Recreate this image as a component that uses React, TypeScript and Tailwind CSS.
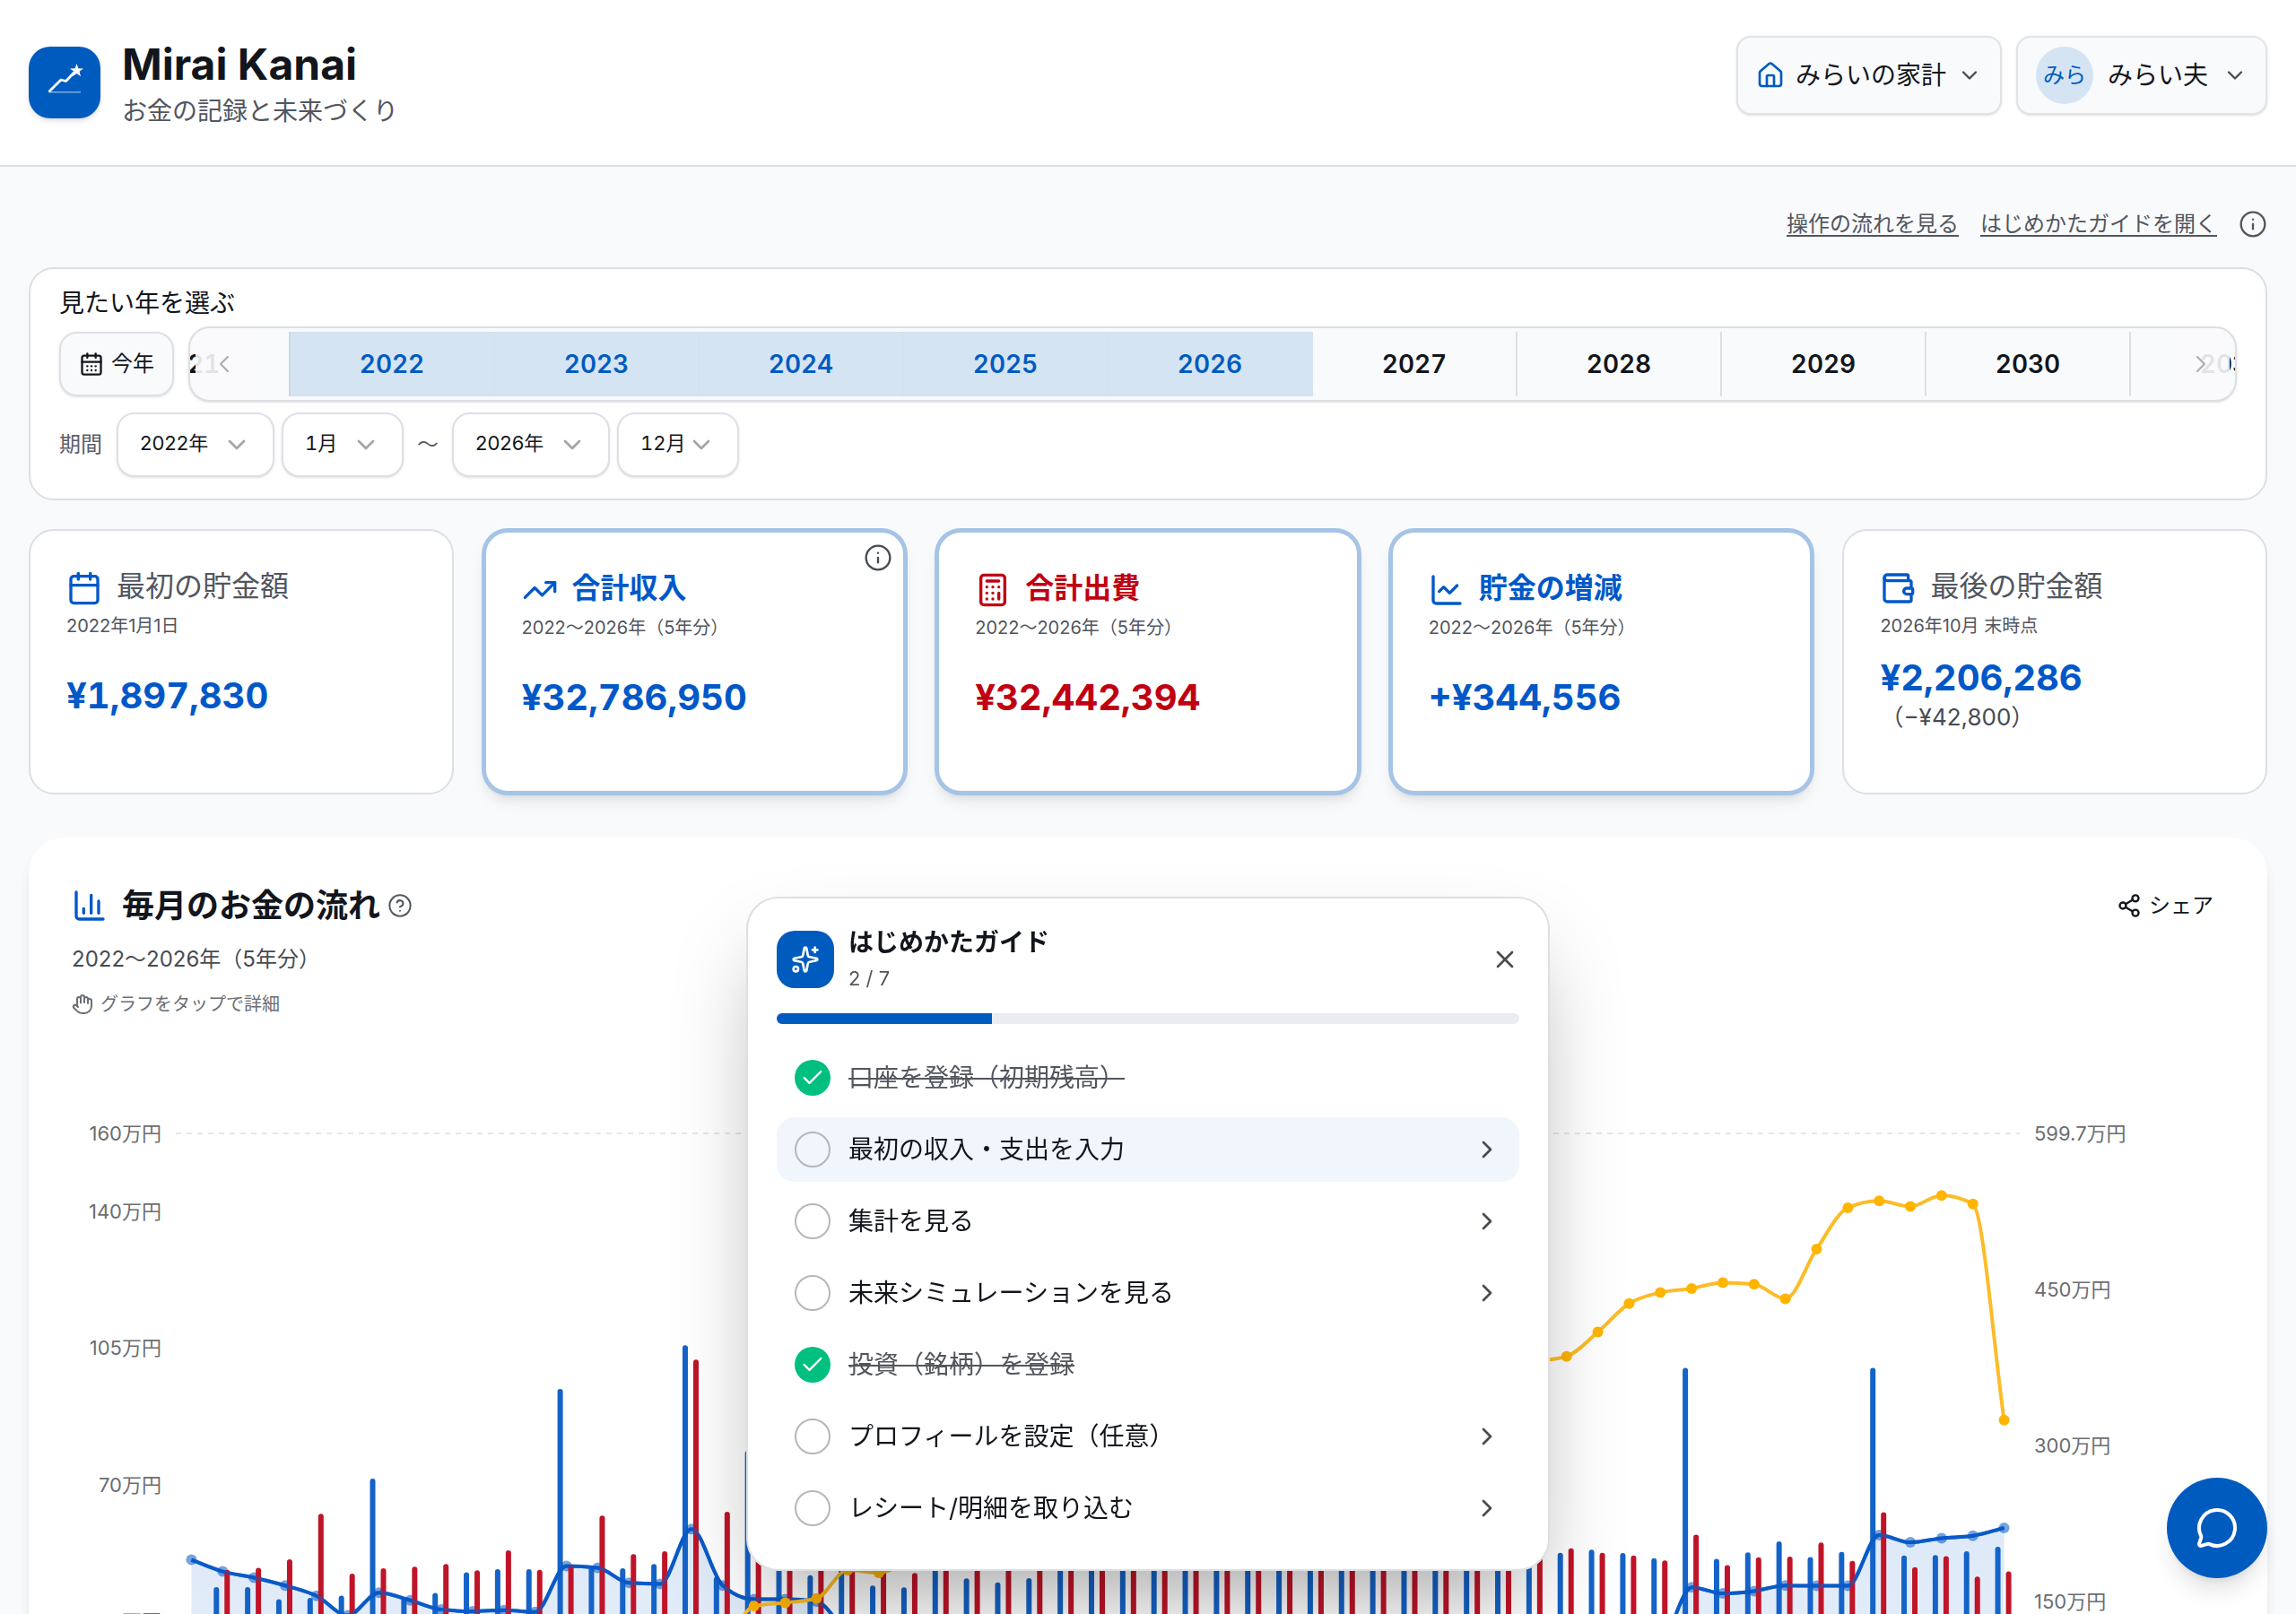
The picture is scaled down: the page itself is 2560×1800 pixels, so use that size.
import React, { useState } from 'react';
import {
  Calculator,
  Calendar,
  CalendarDays,
  ChartColumn,
  ChartLine,
  Check,
  ChevronDown,
  ChevronLeft,
  ChevronRight,
  CircleQuestionMark,
  Hand,
  House,
  Info,
  MessageCircle,
  Share2,
  Sparkles,
  TrendingUp,
  Wallet,
  X,
} from 'lucide-react';
import clsx from 'clsx';

const YEARS = [2021, 2022, 2023, 2024, 2025, 2026, 2027, 2028, 2029, 2030, 2031];

const STEPS = [
  { label: '口座を登録（初期残高）', done: true },
  { label: '最初の収入・支出を入力', done: false },
  { label: '集計を見る', done: false },
  { label: '未来シミュレーションを見る', done: false },
  { label: '投資（銘柄）を登録', done: true },
  { label: 'プロフィールを設定（任意）', done: false },
  { label: 'レシート/明細を取り込む', done: false },
];

// 単位: 万円。先頭は期首残高のみで収支なし
const INCOME = [
  0, 43.7, 43.7, 40.6, 40.9, 41.5, 71.5, 41, 42.2, 47.5, 48.3, 48.3, 94.5, 48.9, 48.5, 49.6, 105.7, 46.3, 78.6, 50,
  46.7, 50, 44.1, 43.6, 80, 45.9, 44.9, 46, 52, 52, 96, 52, 52, 52, 52, 52, 98, 52, 52, 52, 52, 52, 98, 52,
  52.5, 53.3, 52.4, 51.1, 99.9, 50.9, 52.6, 55.4, 51.4, 52.7, 99.9, 51.8, 51.9, 52.9, 54,
];
const EXPENSE = [
  0, 48.1, 48.6, 50.8, 62.5, 47.1, 48.5, 48.9, 49.6, 48, 53.1, 48.1, 49.4, 62, 52.1, 52.9, 102, 63, 55, 54,
  52, 52, 52, 47.3, 60, 52, 52, 52, 52, 52, 52, 52, 52, 52, 52, 52, 52, 52, 52, 52, 52, 52, 52, 52,
  53.6, 52.5, 51.8, 50.5, 57.1, 49.3, 51.3, 51.5, 55.1, 50.4, 62.9, 48.8, 51.6, 46.4, 47.7,
];
const SAVINGS = [
  189.9, 178.7, 172.8, 165.2, 155.3, 136.5, 158.3, 151, 142.1, 140.5, 141.5, 139.8, 184, 182.3, 167.8, 166.8, 219.6,
  165.2, 152, 152, 150, 120, 110, 110, 112, 112, 112, 112, 112, 112, 112, 112, 112, 112, 112, 112, 112, 112, 112, 112,
  112, 112, 112, 112, 112, 112, 112, 112, 163.5, 157.6, 159.9, 165.2, 164.9, 164.9, 213.7, 206.7, 210.7, 213, 220.6,
];
const INVEST_START = 17;
const INVEST = [
  100, 145.4, 148.7, 152.7, 180, 177.4, 190, 205, 215, 225, 235, 245, 255, 265, 275, 285, 295, 305, 315, 325, 335,
  345, 355, 362, 370, 376, 380.5, 385.4, 408.8, 436.2, 446.8, 450.7, 456.3, 454.7, 440.8, 488.6, 528.2, 534.8, 529.5,
  540.1, 531.8, 324.1,
];

const PLOT = { left: 116, right: 2172, top: 64, bottom: 760 };
const BAND = (PLOT.right - PLOT.left) / INCOME.length;

const xAt = (i: number) => PLOT.left + BAND * (i + 0.5);
const yFlow = (v: number) => PLOT.bottom - (v / 160) * (PLOT.bottom - PLOT.top);
const yStock = (v: number) => PLOT.bottom - (v / 599.7) * (PLOT.bottom - PLOT.top);

type Point = { x: number; y: number };

// 単調性を保つ3次補間
function monotonePath(pts: Point[]) {
  const n = pts.length;
  const slope = pts.slice(1).map((p, i) => (p.y - pts[i].y) / (p.x - pts[i].x));
  const tangent = pts.map((_, i) => {
    if (i === 0) return slope[0];
    if (i === n - 1) return slope[n - 2];
    const a = slope[i - 1];
    const b = slope[i];
    if (a * b <= 0) return 0;
    return Math.sign(a) * Math.min(Math.abs(a), Math.abs(b), Math.abs(a + b) / 4) * 2;
  });
  let d = `M${pts[0].x},${pts[0].y}`;
  for (let i = 0; i < n - 1; i++) {
    const h = (pts[i + 1].x - pts[i].x) / 3;
    d += `C${pts[i].x + h},${pts[i].y + tangent[i] * h} ${pts[i + 1].x - h},${pts[i + 1].y - tangent[i + 1] * h} ${pts[i + 1].x},${pts[i + 1].y}`;
  }
  return d;
}

const savingsPts = SAVINGS.map((v, i) => ({ x: xAt(i), y: yStock(v) }));
const investPts = INVEST.map((v, i) => ({ x: xAt(i + INVEST_START), y: yStock(v) }));

const CashflowChart: React.FC = () => {
  const line = monotonePath(savingsPts);
  return (
    <svg viewBox="0 0 2400 880" className="block w-full" role="img" aria-label="毎月のお金の流れ">
      <defs>
        <linearGradient id="savings-fill" x1="0" y1="0" x2="0" y2="1">
          <stop offset="0" stopColor="#0058c8" stopOpacity="0.13" />
          <stop offset="1" stopColor="#0058c8" stopOpacity="0.09" />
        </linearGradient>
      </defs>
      <line x1={PLOT.left} x2={PLOT.right} y1={PLOT.top} y2={PLOT.top} stroke="#e5e6e8" strokeWidth="2" strokeDasharray="6 6" />
      <g fontSize="22" fill="#6b6d70">
        {[160, 140, 105, 70, 35].map((v) => (
          <text key={v} x="100" y={yFlow(v) + 8} textAnchor="end">{v}万円</text>
        ))}
        {[599.7, 450, 300, 150].map((v) => (
          <text key={v} x="2188" y={yStock(v) + 8}>{v}万円</text>
        ))}
      </g>
      <path d={`${line}L${xAt(SAVINGS.length - 1)},${PLOT.bottom}L${xAt(0)},${PLOT.bottom}Z`} fill="url(#savings-fill)" />
      <g fill="#1463c8">
        {INCOME.map((v, i) => v > 0 && (
          <rect key={i} x={xAt(i) - 10} y={yFlow(v)} width="6" height={PLOT.bottom - yFlow(v)} rx="3" />
        ))}
      </g>
      <path d={line} fill="none" stroke="#0a5ac8" strokeWidth="4" />
      <g fill="#0058c8" fillOpacity="0.55">
        {savingsPts.map((p, i) => <circle key={i} cx={p.x} cy={p.y} r="6" />)}
      </g>
      <g fill="#c01428">
        {EXPENSE.map((v, i) => v > 0 && (
          <rect key={i} x={xAt(i) + 2} y={yFlow(v)} width="6" height={PLOT.bottom - yFlow(v)} rx="3" />
        ))}
      </g>
      <path d={line} fill="none" stroke="#0a5ac8" strokeWidth="4" strokeOpacity="0.6" />
      <path d={monotonePath(investPts)} fill="none" stroke="#fcbc28" strokeWidth="4" />
      <g fill="#ffb400">
        {investPts.map((p, i) => <circle key={i} cx={p.x} cy={p.y} r="6" />)}
      </g>
    </svg>
  );
};

const Logo: React.FC = () => (
  <div className="size-20 rounded-3xl bg-[#005bbf] shadow-md">
    <svg viewBox="0 0 80 80" className="size-20" fill="none" aria-hidden="true">
      <path d="M22 50.7H58" stroke="#fff" strokeOpacity="0.5" strokeWidth="1.6" />
      <path d="M22.7 50.3 36 37l5.5 1.5L51 28.5" stroke="#fff" strokeWidth="2.8" strokeLinejoin="round" />
      <path d="m53.5 19 1.8 5.3 5.7.1-4.5 3.4 1.6 5.4-4.6-3.2-4.6 3.2 1.6-5.4-4.5-3.4 5.7-.1z" fill="#fff" />
    </svg>
  </div>
);

const Header: React.FC = () => (
  <header className="flex shrink-0 items-start justify-between border-b-2 border-[#dcdfe4] bg-white px-8 py-10">
    <div className="flex items-center gap-6">
      <Logo />
      <div>
        <h1 className="text-5xl/[64px] font-bold">Mirai Kanai</h1>
        <p className="text-[28px]/[40px] text-[#52565e]">お金の記録と未来づくり</p>
      </div>
    </div>
    <div className="flex gap-4">
      <button className="flex h-22 items-center gap-3 rounded-2xl border-2 border-[#e1e3e7] bg-[#f9fafc] px-5 text-[28px] shadow-sm">
        <House size={32} className="text-[#005bbf]" />
        みらいの家計
        <ChevronDown size={28} className="text-[#474b52]" />
      </button>
      <button className="flex h-22 items-center gap-4 rounded-2xl border-2 border-[#e1e3e7] bg-[#f9fafc] px-5 text-[28px] shadow-sm">
        <span className="flex size-16 items-center justify-center rounded-full bg-[#d5e4f3] text-2xl text-[#005bbf]">みら</span>
        みらい夫
        <ChevronDown size={28} className="text-[#474b52]" />
      </button>
    </div>
  </header>
);

type SelectBoxProps = { label: string; value: string; options: string[]; wide?: boolean };

const SelectBox: React.FC<SelectBoxProps> = ({ label, value, options, wide }) => (
  <div className="relative">
    <select
      aria-label={label}
      defaultValue={value}
      className={clsx(
        'h-18 appearance-none rounded-[20px] border-2 border-[#dee0e5] bg-white pb-1 pl-6 text-[22px] shadow-sm outline-none',
        wide ? 'w-44' : 'w-34 tabular-nums'
      )}
    >
      {options.map((o) => <option key={o}>{o}</option>)}
    </select>
    <ChevronDown size={32} className="pointer-events-none absolute top-5 right-6.5 text-[#a4a5a7]" />
  </div>
);

const MONTHS = Array.from({ length: 12 }, (_, i) => `${i + 1}月`);
const YEAR_OPTIONS = YEARS.map((y) => `${y}年`);

function yearCellStyle(y: number) {
  if (y === 2022) return 'border-[#cdd8e4] bg-[#d5e4f3] text-[#005bbf]';
  if (y > 2022 && y <= 2026) return 'border-[#d3e2f1] bg-[#d5e4f3] text-[#005bbf]';
  if (y === 2027) return 'border-[#d5e4f3]';
  return 'border-[#dcdfe4]';
}

const YearPicker: React.FC = () => (
  <section className="rounded-[28px] border-2 border-[#dcdfe4] bg-white px-8 pt-4 pb-6">
    <h2 className="text-[28px]/[44px]">見たい年を選ぶ</h2>
    <div className="mt-1 flex items-center gap-4">
      <button className="flex h-18 shrink-0 items-center gap-2 rounded-[20px] border-2 border-[#dee0e5] bg-[#f9fafc] px-5 text-2xl shadow-sm">
        <CalendarDays size={28} />
        今年
      </button>
      <div className="relative flex h-21 min-w-0 flex-1 items-center justify-center overflow-hidden rounded-3xl border-2 border-[#dcdfe4] bg-[#f9fafc] pr-2 shadow-sm">
        {YEARS.map((y) => (
          <button key={y} className={clsx('h-18 w-[228px] shrink-0 border-l-2 text-[28px] font-semibold tabular-nums', yearCellStyle(y))}>
            {y}
          </button>
        ))}
        <button aria-label="前の年へ" className="absolute inset-y-1 left-1.5 flex w-16 items-center justify-center bg-[#f9fafc]/90 text-[#a9abb0]">
          <ChevronLeft size={32} strokeWidth={1.5} />
        </button>
        <button aria-label="次の年へ" className="absolute inset-y-1 right-1.5 flex w-16 items-center justify-center bg-[#f9fafc]/90 text-[#a9abb0]">
          <ChevronRight size={32} strokeWidth={1.5} />
        </button>
      </div>
    </div>
    <div className="mt-3 flex items-center gap-2">
      <span className="pr-2 text-2xl text-[#5a5e66]">期間</span>
      <SelectBox label="開始年" value="2022年" options={YEAR_OPTIONS} wide />
      <SelectBox label="開始月" value="1月" options={MONTHS} />
      <span className="w-[38px] text-center text-2xl text-[#5a5e66]">〜</span>
      <SelectBox label="終了年" value="2026年" options={YEAR_OPTIONS} wide />
      <SelectBox label="終了月" value="12月" options={MONTHS} />
    </div>
  </section>
);

type StatCardProps = {
  icon: React.ReactNode;
  title: string;
  sub: string;
  value: string;
  note?: string;
  active?: boolean;
  red?: boolean;
  info?: boolean;
};

const StatCard: React.FC<StatCardProps> = ({ icon, title, sub, value, note, active, red, info }) => (
  <article
    className={clsx(
      'relative flex min-h-[296px] flex-col rounded-[28px] bg-white px-10 py-10',
      active ? 'border-4 border-[#a5c4e6] shadow-lg ring-1 ring-[#a5c4e6]' : 'border-2 border-[#dcdfe4] pb-11',
      red ? 'text-[#c00012]' : 'text-[#0058c8]'
    )}
  >
    <div className="flex h-12 gap-4">
      <span className="self-center">{icon}</span>
      <h3 className={clsx('text-[32px]/[44px]', active ? 'font-bold' : 'text-[#52565e]')}>{title}</h3>
    </div>
    <p className="mt-1 text-xl/7 text-[#52565e]">{sub}</p>
    <div className="flex flex-1 flex-col justify-center">
      <p className="text-[40px]/[48px] font-bold tabular-nums">{value}</p>
      {note && <p className="text-[26px]/[40px] text-[#474b52]">{note}</p>}
    </div>
    {info && (
      <button aria-label="説明" className="absolute top-3 right-3 text-[#474b52]">
        <Info size={32} strokeWidth={1.75} />
      </button>
    )}
  </article>
);

const ChartPanel: React.FC = () => (
  <section className="mt-12 rounded-[40px] bg-white px-12 pt-12 shadow-lg">
    <div className="flex h-14 items-center justify-between">
      <div className="flex items-center gap-2">
        <ChartColumn size={40} className="text-[#0058c8]" />
        <h2 className="pl-2 text-4xl/[56px] font-bold">毎月のお金の流れ</h2>
        <CircleQuestionMark size={28} strokeWidth={1.75} className="text-[#52565e]" />
      </div>
      <button className="flex items-center gap-2 px-3 text-2xl">
        <Share2 size={28} />
        シェア
      </button>
    </div>
    <p className="mt-3 text-2xl/[40px] text-[#474b52]">2022〜2026年（5年分）</p>
    <p className="mt-3.5 flex items-center gap-2 text-xl/[32px] text-[#6b6e73]">
      <Hand size={24} />
      グラフをタップで詳細
    </p>
    <div className="mt-16">
      <CashflowChart />
    </div>
  </section>
);

const StartGuide: React.FC<{ onClose: () => void }> = ({ onClose }) => (
  <aside
    role="dialog"
    aria-label="はじめかたガイド"
    className="fixed inset-x-0 bottom-12 mx-auto w-[896px] rounded-[36px] border-2 border-[#dcdfe4] bg-white px-8 pt-7 pb-8 shadow-[0_50px_100px_-24px_rgba(0,0,0,0.35)]"
  >
    <div className="flex items-center gap-4">
      <div className="flex size-16 items-center justify-center rounded-[20px] bg-[#005bbf] text-white">
        <Sparkles size={32} />
      </div>
      <div className="flex-1">
        <h2 className="text-[28px]/[42px] font-bold">はじめかたガイド</h2>
        <p className="text-[22px]/[38px] text-[#52565e]">2 / 7</p>
      </div>
      <button aria-label="閉じる" onClick={onClose} className="text-[#474b52]">
        <X size={32} />
      </button>
    </div>
    <div className="mt-5 h-3 overflow-hidden rounded-full bg-[#e9edf2]">
      <div className="h-full w-[29%] bg-[#005bbf]" />
    </div>
    <ul className="mt-6 space-y-2">
      {STEPS.map((step, i) => (
        <li key={step.label}>
          <button className={clsx('flex h-18 w-full items-center gap-5 rounded-[20px] px-5 text-left text-[28px]', i === 1 && 'bg-[#f1f6fd]')}>
            {step.done ? (
              <span className="flex size-10 items-center justify-center rounded-full bg-[#00bf7f] text-white">
                <Check size={28} />
              </span>
            ) : (
              <span className="size-10 rounded-full border-2 border-[#b5b7ba]" />
            )}
            <span className={clsx('flex-1', step.done && 'text-[#52565e]')}>
              <span className={clsx(step.done && 'line-through')}>{step.label}</span>
            </span>
            {!step.done && <ChevronRight size={32} className="text-[#474b52]" />}
          </button>
        </li>
      ))}
    </ul>
  </aside>
);

const App: React.FC = () => {
  const [guideOpen, setGuideOpen] = useState(true);

  return (
    <div className="flex h-screen flex-col overflow-hidden bg-[#f9fafc] font-['Inter','Noto_Sans_CJK_JP',sans-serif] text-[#12161c]">
      <Header />
      <main className="px-8 pt-12">
        <nav className="flex h-8 items-center justify-end gap-6 text-2xl text-[#52565e]">
          <a href="#flow" className="underline underline-offset-4">操作の流れを見る</a>
          <a href="#guide" className="underline underline-offset-4">はじめかたガイドを開く</a>
          <button aria-label="説明"><Info size={32} strokeWidth={1.75} /></button>
        </nav>
        <div className="mt-8">
          <YearPicker />
        </div>
        <div className="mt-8 grid grid-cols-5 gap-8">
          <StatCard icon={<Calendar size={40} />} title="最初の貯金額" sub="2022年1月1日" value="¥1,897,830" />
          <StatCard icon={<TrendingUp size={40} />} title="合計収入" sub="2022〜2026年（5年分）" value="¥32,786,950" active info />
          <StatCard icon={<Calculator size={40} />} title="合計出費" sub="2022〜2026年（5年分）" value="¥32,442,394" active red />
          <StatCard icon={<ChartLine size={40} />} title="貯金の増減" sub="2022〜2026年（5年分）" value="+¥344,556" active />
          <StatCard icon={<Wallet size={40} />} title="最後の貯金額" sub="2026年10月 末時点" value="¥2,206,286" note="（−¥42,800）" />
        </div>
        <ChartPanel />
      </main>
      {guideOpen && <StartGuide onClose={() => setGuideOpen(false)} />}
      <button
        aria-label="チャットを開く"
        className="fixed right-8 bottom-10 flex size-28 items-center justify-center rounded-full bg-[#005bbf] text-white shadow-xl"
      >
        <MessageCircle size={48} />
      </button>
    </div>
  );
};

export default App;
